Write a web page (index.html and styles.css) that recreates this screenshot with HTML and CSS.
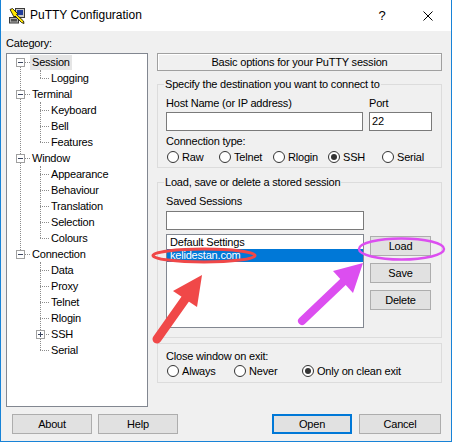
FILE: index.html
```html
<!DOCTYPE html>
<html lang="en">

<head>
    <title>PuTTY Configuration</title>
    <meta charset="UTF-8">
    <meta name="viewport" content="width=device-width, initial-scale=1">
    <link rel="stylesheet" href="styles.css">
</head>

<body>
    <div class="window">
        <div class="titlebar">
            <svg class="appicon" viewBox="0 0 16 16" width="16" height="16">
                <rect x="6.5" y="0.5" width="9" height="9" fill="#c8c8c8" stroke="#3a3a3a" />
                <rect x="8" y="2" width="6" height="5" fill="#1e3c9c" />
                <rect x="0.5" y="9.5" width="9" height="5.5" fill="#b0b0b0" stroke="#3a3a3a" />
                <rect x="2" y="11" width="6" height="2.5" fill="#505050" />
                <path d="M1 1.5 L3.5 0.5 L8.5 5.5 L7.5 6.5 L14.5 13 L15 15.5 L12.5 14.5 L6 8 L5 9 Z" fill="#ffe600"
                    stroke="#000" stroke-width="0.8" stroke-linejoin="round" />
            </svg>
            <span class="title">PuTTY Configuration</span>
            <span class="tbtn help">?</span>
            <span class="tbtn close">
                <svg width="10" height="10" viewBox="0 0 10 10">
                    <path d="M0.5 0.5 L9.5 9.5 M9.5 0.5 L0.5 9.5" stroke="#000" stroke-width="1" />
                </svg>
            </span>
        </div>

        <div class="client">
            <div class="category">Category:</div>
            <div class="main">
                <div class="tree">
                    <div class="node">
                        <div class="row"><span class="exp"></span><span class="label selected">Session</span></div>
                        <div class="kids">
                            <div class="row"><span class="label">Logging</span></div>
                        </div>
                    </div>
                    <div class="node">
                        <div class="row"><span class="exp"></span><span class="label">Terminal</span></div>
                        <div class="kids">
                            <div class="row"><span class="label">Keyboard</span></div>
                            <div class="row"><span class="label">Bell</span></div>
                            <div class="row"><span class="label">Features</span></div>
                        </div>
                    </div>
                    <div class="node">
                        <div class="row"><span class="exp"></span><span class="label">Window</span></div>
                        <div class="kids">
                            <div class="row"><span class="label">Appearance</span></div>
                            <div class="row"><span class="label">Behaviour</span></div>
                            <div class="row"><span class="label">Translation</span></div>
                            <div class="row"><span class="label">Selection</span></div>
                            <div class="row"><span class="label">Colours</span></div>
                        </div>
                    </div>
                    <div class="node">
                        <div class="row"><span class="exp"></span><span class="label">Connection</span></div>
                        <div class="kids">
                            <div class="row"><span class="label">Data</span></div>
                            <div class="row"><span class="label">Proxy</span></div>
                            <div class="row"><span class="label">Telnet</span></div>
                            <div class="row"><span class="label">Rlogin</span></div>
                            <div class="row branch"><span class="exp plus"></span><span class="label">SSH</span></div>
                            <div class="row"><span class="label">Serial</span></div>
                        </div>
                    </div>
                </div>

                <div class="panel">
                    <div class="header">Basic options for your PuTTY session</div>

                    <div class="group dest">
                        <div class="legend">Specify the destination you want to connect to</div>
                        <div class="pair labels">
                            <span>Host Name (or IP address)</span>
                            <span>Port</span>
                        </div>
                        <div class="pair fields">
                            <div class="field"></div>
                            <div class="field">22</div>
                        </div>
                        <div class="ctype">Connection type:</div>
                        <div class="radios proto">
                            <span class="radio"><i></i>Raw</span>
                            <span class="radio"><i></i>Telnet</span>
                            <span class="radio"><i></i>Rlogin</span>
                            <span class="radio on"><i></i>SSH</span>
                            <span class="radio"><i></i>Serial</span>
                        </div>
                    </div>

                    <div class="group saved">
                        <div class="legend">Load, save or delete a stored session</div>
                        <div class="saved-label">Saved Sessions</div>
                        <div class="field wide"></div>
                        <div class="sessions">
                            <div class="list">
                                <div class="item">Default Settings</div>
                                <div class="item sel">kelidestan.com</div>
                            </div>
                            <div class="actions">
                                <button class="btn small" type="button">Load</button>
                                <button class="btn small" type="button">Save</button>
                                <button class="btn small" type="button">Delete</button>
                            </div>
                        </div>
                    </div>

                    <div class="group exit">
                        <div>Close window on exit:</div>
                        <div class="radios onexit">
                            <span class="radio"><i></i>Always</span>
                            <span class="radio"><i></i>Never</span>
                            <span class="radio on"><i></i>Only on clean exit</span>
                        </div>
                    </div>
                </div>
            </div>

            <div class="footer">
                <button class="btn" type="button">About</button>
                <button class="btn help-btn" type="button">Help</button>
                <span class="spacer"></span>
                <button class="btn default" type="button">Open</button>
                <button class="btn cancel" type="button">Cancel</button>
            </div>
        </div>

        <svg class="marks" width="452" height="442" viewBox="0 0 452 442">
            <ellipse cx="204" cy="255.5" rx="51" ry="6.5" fill="none" stroke="#f04848" stroke-width="3" />
            <line x1="157" y1="339" x2="186" y2="298" stroke="#f04848" stroke-width="9" stroke-linecap="round" />
            <polygon points="202,275 173,291 197,307" fill="#f04848" />
            <ellipse cx="401.5" cy="249" rx="42.5" ry="10.5" fill="none" stroke="#dc4ef0" stroke-width="2.5" />
            <line x1="302" y1="321" x2="344" y2="281" stroke="#dc4ef0" stroke-width="8" stroke-linecap="round" />
            <polygon points="363,263 333,271 353,293" fill="#dc4ef0" />
        </svg>
    </div>
</body>

</html>
```

FILE: styles.css
```css
body {
    margin: 0;
    background: #f0f0f0;
}

.window {
    position: relative;
    width: 452px;
    height: 442px;
    box-sizing: border-box;
    border: 1px solid #1883d7;
    border-top: none;
    background: #f0f0f0;
    font-family: "Liberation Sans", Arial, sans-serif;
    font-size: 11px;
    line-height: 13px;
    letter-spacing: -0.2px;
    color: #000;
}

.titlebar {
    height: 31px;
    background: #fff;
    display: flex;
    align-items: center;
}

.appicon {
    margin-left: 8px;
}

.title {
    flex: 1;
    margin-left: 5px;
    font-size: 12px;
    letter-spacing: 0;
}

.tbtn {
    width: 46px;
    height: 31px;
    display: flex;
    align-items: center;
    justify-content: center;
}

.help {
    font-size: 13px;
    letter-spacing: 0;
}

.client {
    padding-left: 5px;
}

.category {
    margin-top: 6px;
}

.main {
    display: flex;
    margin-top: 3px;
}

/* tree */
.tree {
    width: 142px;
    height: 354px;
    box-sizing: border-box;
    border: 1px solid #828790;
    background: #fff;
}

.node {
    position: relative;
}

.node::before {
    content: "";
    position: absolute;
    left: 13px;
    top: 8px;
    bottom: -8px;
    border-left: 1px dotted #8c8c8c;
}

.node:last-child::before {
    display: none;
}

.row {
    position: relative;
    height: 16px;
    display: flex;
    align-items: center;
}

.node > .row {
    padding-left: 9px;
}

.node > .row::after {
    content: "";
    position: absolute;
    left: 18px;
    top: 8px;
    width: 5px;
    border-top: 1px dotted #8c8c8c;
}

.exp {
    position: relative;
    z-index: 1;
    width: 9px;
    height: 9px;
    box-sizing: border-box;
    border: 1px solid #a0a0a0;
    background: #fff;
    margin-right: 5px;
}

.exp::before,
.exp.plus::after {
    content: "";
    position: absolute;
    left: 1px;
    top: 3px;
    width: 5px;
    height: 1px;
    background: #3c4660;
}

.exp.plus::after {
    left: 3px;
    top: 1px;
    width: 1px;
    height: 5px;
}

.label {
    padding: 0 2px;
    line-height: 15px;
}

.label.selected {
    background: #e5e5e5;
}

.kids {
    position: relative;
}

.kids::before {
    content: "";
    position: absolute;
    left: 33px;
    top: 0;
    bottom: 8px;
    border-left: 1px dotted #8c8c8c;
}

.kids .row {
    padding-left: 42px;
}

.kids .row::after {
    content: "";
    position: absolute;
    left: 33px;
    top: 8px;
    width: 9px;
    border-top: 1px dotted #8c8c8c;
}

.kids .row.branch {
    padding-left: 29px;
}

.kids .row.branch .exp {
    margin-right: 4px;
}

/* right side */
.panel {
    width: 285px;
    margin-left: 9px;
}

.header {
    height: 18px;
    box-sizing: border-box;
    border: 1px solid #a0a0a0;
    box-shadow: inset 1px 1px 0 #fff;
    text-align: center;
    line-height: 16px;
}

.group {
    border: 1px solid #dcdcdc;
    padding: 0 8px;
}

.legend {
    width: fit-content;
    margin: -7px 0 0 -2px;
    padding: 0 1px;
    background: #f0f0f0;
}

.dest {
    margin-top: 13px;
    padding-bottom: 3px;
}

.pair {
    display: grid;
    grid-template-columns: 197px 63px;
    column-gap: 6px;
}

.labels {
    margin-top: 6px;
}

.fields {
    margin-top: 2px;
}

.field {
    height: 19px;
    box-sizing: border-box;
    border: 1px solid #7a7a7a;
    background: #fff;
    padding-left: 2px;
    line-height: 17px;
}

.ctype {
    margin-top: 4px;
}

.radios {
    display: grid;
    padding-left: 1px;
}

.proto {
    margin-top: 2px;
    grid-template-columns: 52px 54px 55px 54px auto;
}

.onexit {
    margin-top: 1px;
    grid-template-columns: 67px 68px auto;
}

.radio {
    height: 14px;
    display: flex;
    align-items: center;
    gap: 3px;
    white-space: nowrap;
}

.radio i {
    position: relative;
    width: 12px;
    height: 12px;
    box-sizing: border-box;
    border: 1px solid #333;
    border-radius: 50%;
    background: #fff;
}

.radio.on i::after {
    content: "";
    position: absolute;
    left: 2px;
    top: 2px;
    width: 6px;
    height: 6px;
    border-radius: 50%;
    background: #333;
}

.saved {
    margin-top: 14px;
    padding-bottom: 9px;
}

.saved-label {
    margin-top: 6px;
}

.field.wide {
    width: 198px;
    margin-top: 3px;
}

.sessions {
    display: flex;
    margin-top: 4px;
}

.list {
    width: 198px;
    height: 94px;
    box-sizing: border-box;
    border: 1px solid #828790;
    background: #fff;
    padding: 1px 0;
}

.item {
    height: 13px;
    padding-left: 3px;
}

.item.sel {
    background: #0078d7;
    color: #fff;
}

.actions {
    display: flex;
    flex-direction: column;
    gap: 7px;
    margin: 2px 0 0 6px;
}

.exit {
    margin-top: 5px;
    padding-top: 6px;
    padding-bottom: 4px;
}

.btn {
    width: 80px;
    height: 20px;
    box-sizing: border-box;
    border: 1px solid #adadad;
    background: #e1e1e1;
    padding: 0;
    font-family: "Liberation Sans", Arial, sans-serif;
    font-size: 11px;
    letter-spacing: -0.2px;
    color: #000;
}

.btn.small {
    width: 61px;
}

.btn.default {
    border: 2px solid #0078d7;
}

.footer {
    display: flex;
    margin-top: 7px;
    padding: 0 10px 0 6px;
}

.help-btn {
    margin-left: 6px;
}

.spacer {
    flex: 1;
}

.btn.cancel {
    width: 82px;
    margin-left: 7px;
}

.marks {
    position: absolute;
    left: -1px;
    top: 0;
    pointer-events: none;
}
```
